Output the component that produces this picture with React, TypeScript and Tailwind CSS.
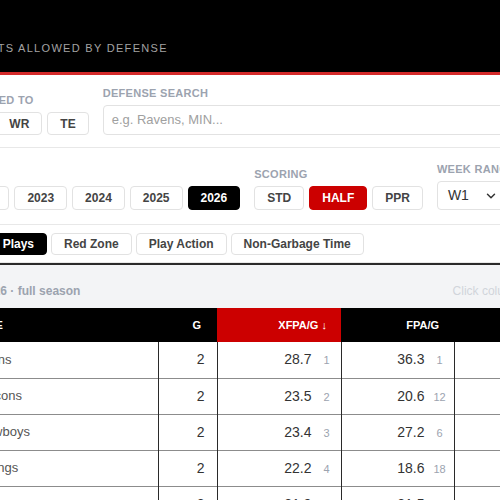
import React from "react";
import { ChevronDown } from "lucide-react";

const font = { fontFamily: '"Liberation Sans", Arial, sans-serif' };

function Btn({ label, active, red, h = "h-[24px]" }: { label: string; active?: boolean; red?: boolean; h?: string }) {
  const base = `${h} px-3 flex items-center justify-center rounded-[4px] border text-[12px] font-bold whitespace-nowrap`;
  if (red) return <div className={`${base} bg-[#cc0000] border-[#cc0000] text-white`}>{label}</div>;
  if (active) return <div className={`${base} bg-black border-black text-white`}>{label}</div>;
  return <div className={`${base} bg-white border-[#e2e2e2] text-[#444]`}>{label}</div>;
}

function Label({ children }: { children: React.ReactNode }) {
  return <div className="text-[11px] leading-[13px] font-bold tracking-[0.3px] text-[#9ca3af] uppercase whitespace-nowrap">{children}</div>;
}

const rows = [
  { r: 1, team: "Titans", g: 2, x: "28.7", xr: 1, f: "36.3", fr: 1, d: "+7.6" },
  { r: 2, team: "Falcons", g: 2, x: "23.5", xr: 2, f: "20.6", fr: 12, d: "-2.9" },
  { r: 3, team: "Cowboys", g: 2, x: "23.4", xr: 3, f: "27.2", fr: 6, d: "+3.8" },
  { r: 4, team: "Vikings", g: 2, x: "22.2", xr: 4, f: "18.6", fr: 18, d: "-3.6" },
  { r: 5, team: "Bears", g: 2, x: "21.9", xr: 5, f: "21.5", fr: 9, d: "-0.4" },
];

export default function App() {
  return (
    <div className="w-[500px] h-[500px] overflow-hidden bg-white" style={font}>
      <div className="ml-[-101px] w-[717px]">
        {/* Header */}
        <div className="h-[75px] bg-black border-b-[3px] border-[#d42a2a] flex flex-col justify-end pb-[17px] pl-[4px]">
          <div className="text-[11px] leading-[14px] tracking-[1.3px] text-[#a3a3a3] uppercase whitespace-nowrap">
            Fantasy Points Allowed by Defense
          </div>
        </div>

        {/* Row 1 */}
        <div className="flex items-end gap-[14px] pt-[12px] pb-[12px] border-b border-[#e8e8e8]">
          <div className="flex flex-col gap-[5px]">
            <Label>Position Allowed To</Label>
            <div className="flex gap-[5px]">
              <Btn label="QB" h="h-[23px]" />
              <Btn label="RB" h="h-[23px]" />
              <Btn label="WR" h="h-[23px]" />
              <Btn label="TE" h="h-[23px]" />
            </div>
          </div>
          <div className="flex-1 flex flex-col gap-[5px]">
            <Label>Defense Search</Label>
            <div className="h-[30px] border border-[#e2e2e2] rounded-[4px] pl-[8px] flex items-center text-[13px] text-[#a0a0a0]">
              e.g. Ravens, MIN...
            </div>
          </div>
        </div>

        {/* Row 2 */}
        <div className="flex items-end gap-[14px] pt-[15px] pb-[14px] border-b border-[#e8e8e8]">
          <div className="flex flex-col gap-[5px]">
            <Label>Season</Label>
            <div className="flex gap-[5px]">
              <Btn label="2021" />
              <Btn label="2022" />
              <Btn label="2023" />
              <Btn label="2024" />
              <Btn label="2025" />
              <Btn label="2026" active />
            </div>
          </div>
          <div className="flex flex-col gap-[5px]">
            <Label>Scoring</Label>
            <div className="flex gap-[5px]">
              <Btn label="STD" />
              <Btn label="HALF" red />
              <Btn label="PPR" />
            </div>
          </div>
          <div className="flex flex-col gap-[5px]">
            <Label>Week Range</Label>
            <div className="flex items-center gap-2">
              <div className="h-[29px] w-[68px] border border-[#e2e2e2] rounded-[4px] pl-[10px] pr-[6px] flex items-center justify-between text-[14px] text-[#333]">
                <span>W1</span>
                <ChevronDown size={14} strokeWidth={2.5} />
              </div>
              <span className="text-[12px] text-[#666]">to</span>
              <div className="h-[29px] w-[68px] border border-[#e2e2e2] rounded-[4px] pl-[10px] pr-[6px] flex items-center justify-between text-[14px] text-[#333]">
                <span>W18</span>
                <ChevronDown size={14} strokeWidth={2.5} />
              </div>
            </div>
          </div>
        </div>

        {/* Row 3 */}
        <div className="flex items-center pt-[8px] pb-[7px] border-b border-[#e8e8e8]">
          <div className="w-[72px]">
            <Label>Split</Label>
          </div>
          <div className="flex gap-[4px]">
            <Btn label="All Plays" active h="h-[22px]" />
            <Btn label="Red Zone" h="h-[22px]" />
            <Btn label="Play Action" h="h-[22px]" />
            <Btn label="Non-Garbage Time" h="h-[22px]" />
          </div>
        </div>

        {/* Table section */}
        <div className="border-t-2 border-[#2a2a2a]">
          <div className="h-[43px] bg-[#f3f4f6] flex items-end justify-between pb-[9px] pl-[20px] pr-[12px]">
            <span className="text-[12px] leading-[16px] font-bold text-[#9ca3af] whitespace-nowrap">Half PPR · 2026 · full season</span>
            <span className="text-[12px] leading-[16px] text-[#d1d5db] whitespace-nowrap">Click column headers to sort</span>
          </div>
          <table className="table-fixed border-collapse w-[717px]">
            <colgroup>
              <col className="w-[32px]" />
              <col className="w-[227px]" />
              <col className="w-[59px]" />
              <col className="w-[124px]" />
              <col className="w-[113px]" />
              <col className="w-[162px]" />
            </colgroup>
            <thead>
              <tr className="bg-black text-white text-[11px] font-bold uppercase">
                <th className="h-[34px] text-center">#</th>
                <th className="h-[34px] text-left pl-[14px] tracking-[1px]">Defense</th>
                <th className="h-[34px] text-right pr-4">G</th>
                <th className="h-[34px] text-right pr-[14px] bg-[#cc0000]">XFPA/G ↓</th>
                <th className="h-[34px] text-right pr-[15px]">FPA/G</th>
                <th className="h-[34px] text-right pr-4">Diff</th>
              </tr>
            </thead>
            <tbody className="text-[14px] text-[#333]">
              {rows.map((r) => (
                <tr key={r.r} className="border-b border-[#8c8c8c]">
                  <td className="h-[36px] text-center border-r border-[#2a2a2a] text-[#666]">{r.r}</td>
                  <td className="h-[36px] pl-[12px] border-r border-[#2a2a2a]">
                    <div className="flex items-center gap-[13px] text-[13px] text-[#555]">
                      <span className="w-[20px] h-[20px] rounded-full bg-[#ddd] inline-block" />
                      <span>{r.team}</span>
                    </div>
                  </td>
                  <td className="h-[36px] text-right pr-3 border-r border-[#2a2a2a]">{r.g}</td>
                  <td className="h-[36px] border-r border-[#2a2a2a] pr-[4px]">
                    <div className="flex justify-end items-baseline">
                      <span>{r.x}</span>
                      <span className="w-[20px] ml-[5px] text-center text-[11px] text-[#9ca3af]">{r.xr}</span>
                    </div>
                  </td>
                  <td className="h-[36px] border-r border-[#2a2a2a] pr-[4px]">
                    <div className="flex justify-end items-baseline">
                      <span>{r.f}</span>
                      <span className="w-[20px] ml-[5px] text-center text-[11px] text-[#9ca3af]">{r.fr}</span>
                    </div>
                  </td>
                  <td className="h-[36px] text-right pr-4">{r.d}</td>
                </tr>
              ))}
            </tbody>
          </table>
        </div>
      </div>
    </div>
  );
}
